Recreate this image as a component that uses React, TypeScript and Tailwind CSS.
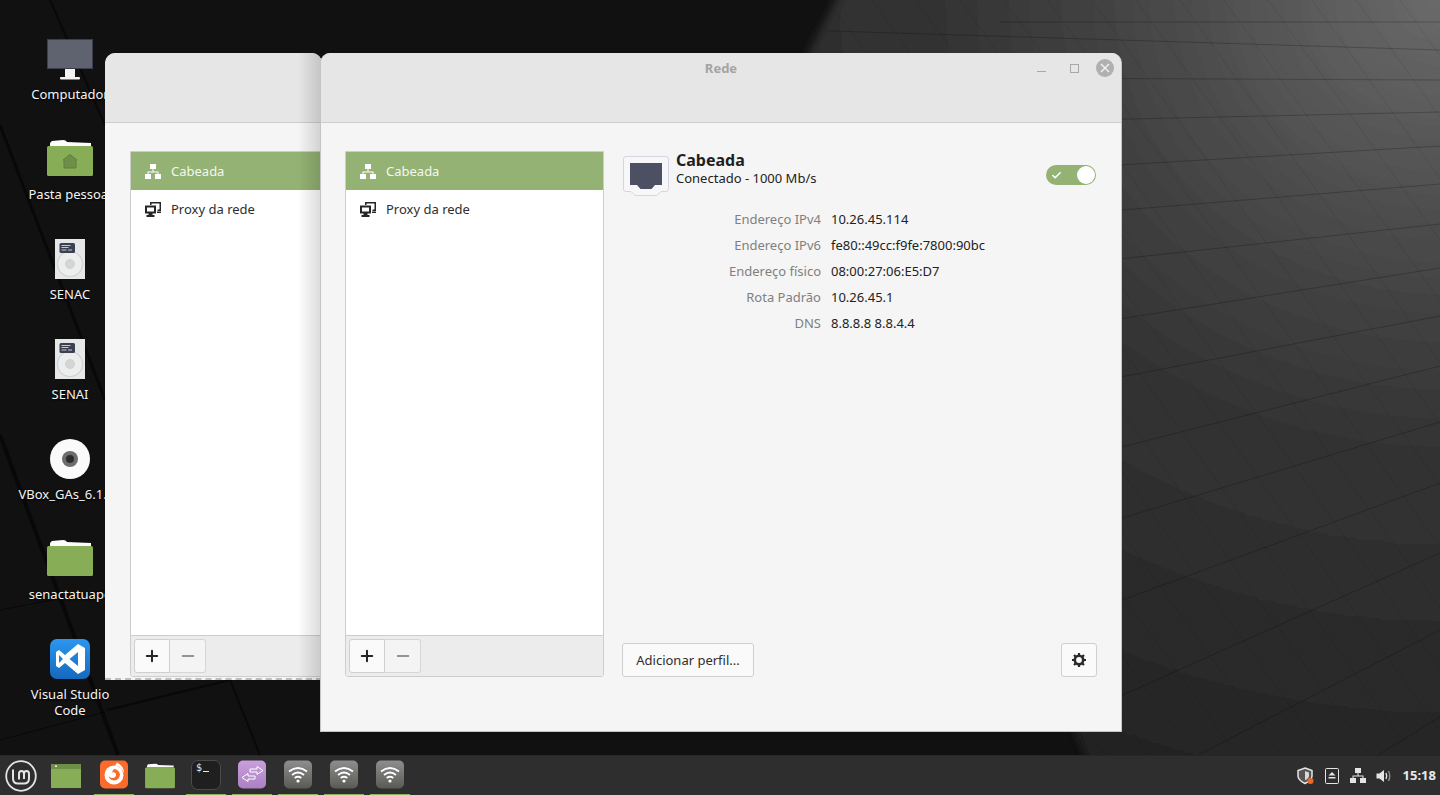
import { Minus, Plus, Check } from "lucide-react";

const font = "font-['Noto_Sans','Open_Sans',sans-serif]";

const crossLines = [
  [1000, 22, 1440, 22],
  [800, 30, 1440, 50],
  [1000, 78, 1440, 80],
  [1000, 122, 1440, 112],
  [1000, 172, 1440, 146],
  [1000, 220, 1440, 184],
  [1000, 272, 1440, 224],
  [1000, 338, 1440, 268],
  [1000, 400, 1440, 316],
  [1000, 478, 1440, 366],
  [1000, 555, 1440, 422],
  [1000, 645, 1440, 483],
  [1000, 750, 1440, 553],
  [1198, 755, 1440, 630],
  [1378, 755, 1440, 717],
];

const slantLines = Array.from({ length: 30 }, (_, i) => 300 + i * 44);

function Wallpaper() {
  return (
    <svg className="absolute inset-0" width="1440" height="795" viewBox="0 0 1440 795">
      <defs>
        <radialGradient id="wall" cx="0" cy="0" r="1" gradientUnits="userSpaceOnUse" gradientTransform="translate(1440 0) scale(1000 900)">
          <stop offset="0" stopColor="#6a6a6a" />
          <stop offset="0.32" stopColor="#444444" />
          <stop offset="0.5" stopColor="#333333" />
          <stop offset="0.7" stopColor="#2c2c2c" />
          <stop offset="0.85" stopColor="#262626" />
          <stop offset="1" stopColor="#1c1c1c" />
        </radialGradient>
        <filter id="soft" x="-5%" y="-5%" width="110%" height="110%">
          <feGaussianBlur stdDeviation="5" />
        </filter>
        <clipPath id="lit">
          <path d="M846 0 L1440 0 L1440 795 L1110 795 L800 70 Z" />
        </clipPath>
      </defs>
      <rect width="1440" height="795" fill="#111112" />
      <path d="M846 -20 L1470 -20 L1470 815 L1110 815 L800 70 Z" fill="url(#wall)" filter="url(#soft)" />
      <g clipPath="url(#lit)" fill="none" stroke="#000">
        <g strokeOpacity="0.22">
          {crossLines.map(([a, b, c, d]) => (
            <line key={`${a}-${b}`} x1={a} y1={b} x2={c} y2={d} />
          ))}
        </g>
        <g strokeOpacity="0.08">
          {slantLines.map((x) => (
            <line key={x} x1={x} y1={0} x2={x + 570} y2={795} />
          ))}
        </g>
      </g>
      <g stroke="#000" strokeOpacity="0.5" fill="none">
        <path d="M50 0 L105 125" strokeWidth="2" />
        <path d="M0 125 L105 400" strokeWidth="3" />
        <path d="M0 435 L118 755" strokeWidth="4" />
        <path d="M107 710 L230 680 L260 755" strokeWidth="2" />
        <path d="M0 740 L105 712" />
        <path d="M0 610 L105 590" />
      </g>
    </svg>
  );
}

function ComputerIcon() {
  return (
    <svg width="46" height="41" viewBox="0 0 46 41">
      <rect x="0.5" y="0.5" width="45" height="29" fill="#5f6370" stroke="#3c3f4c" />
      <rect x="18" y="30" width="10" height="8" fill="#f2f2f2" />
      <rect x="13" y="38" width="20" height="2.500" rx="1" fill="#f2f2f2" />
    </svg>
  );
}

function FolderIcon({ home }: { home?: boolean }) {
  return (
    <svg width="46" height="38" viewBox="0 0 46 38">
      <path d="M3 5 Q3 3 5 2 L16 1 Q19 1 20 3 L44 4 L44 7 L3 7 Z" fill="#fbfbfb" />
      <rect y="7" width="46" height="30" rx="1.5" fill="#87ad57" />
      {home && <path d="M23 15.500 L30 21 L29 21 L29 29 L17 29 L17 21 L16 21 Z" fill="#6e8f48" stroke="#5f7e3e" />}
    </svg>
  );
}

function DriveIcon() {
  return (
    <svg width="30" height="40" viewBox="0 0 30 40">
      <rect width="30" height="40" fill="#e6e7e9" />
      <circle cx="15" cy="25" r="12.5" fill="#eceded" stroke="#d0d1d4" strokeWidth="1.2" />
      <circle cx="15" cy="25" r="4.5" fill="#d4d5d7" stroke="#c4c5c8" strokeWidth="0.6" />
      <rect x="4.5" y="4" width="15.5" height="10" rx="1.5" fill="#3c4150" />
      <path d="M6.5 6.5h9M6.5 8.5h7M6.5 11h5M13 11h4" stroke="#d5d7dc" strokeWidth="0.9" />
    </svg>
  );
}

function DiscIcon() {
  return (
    <svg width="40" height="40" viewBox="0 0 40 40">
      <circle cx="20" cy="20" r="20" fill="#fafafa" />
      <circle cx="20" cy="20" r="8" fill="#6d6d6d" />
      <circle cx="20" cy="20" r="4" fill="#2c2c2c" />
    </svg>
  );
}

function VsCodeIcon() {
  return (
    <svg width="40" height="40" viewBox="0 0 40 40">
      <defs>
        <linearGradient id="vs" x1="0" y1="0" x2="0" y2="1">
          <stop offset="0" stopColor="#2b96f0" />
          <stop offset="1" stopColor="#1469bd" />
        </linearGradient>
      </defs>
      <rect width="40" height="40" rx="7" fill="url(#vs)" />
      <path d="M28 5 L35 9 V31 L28 35 L15 24 L9 29 L6 27 V13 L9 11 L15 16 Z M28 13 L19.500 20 L28 27 Z M9 16 V24 L13 20 Z" fill="#fff" fillRule="evenodd" />
    </svg>
  );
}

function DesktopIcon({ label, top, children }: { label: string; top: string; children: React.ReactNode }) {
  return (
    <div className={`absolute left-[0px] w-[140px] flex flex-col items-center ${top}`}>
      <div className="h-[46px] pt-[1px] flex items-start justify-center">{children}</div>
      <div className="mt-[2px] text-center text-[13px] leading-[16px] text-[#f4f4f4] whitespace-pre-line [text-shadow:0_1px_2px_#000]">{label}</div>
    </div>
  );
}

function NetworkIcon({ color }: { color: string }) {
  return (
    <svg width="16" height="15" viewBox="0 0 16 15" fill={color}>
      <rect x="5" y="0" width="6" height="5" />
      <rect x="0" y="10" width="6" height="5" />
      <rect x="10" y="10" width="6" height="5" />
      <path d="M7.500 5h1v2.500h5V10h-1V8.500h-9V10h-1V7.500h5z" />
    </svg>
  );
}

function ProxyIcon() {
  return (
    <svg width="16" height="15" viewBox="0 0 16 15" fill="#262626">
      <path d="M5 0H16V9H12.500V7.500H14.500V1.500H6.500V3H5z" />
      <path d="M0 3.500H11V11.500H7.500V13H9.500V15H1.500V13H3.500V11.500H0Z M2 5.500V9.500H9V5.500Z" fillRule="evenodd" />
      <path d="M12 9.500H16V11H12z" />
    </svg>
  );
}

function NetworkList({ width }: { width: string }) {
  return (
    <div className={`flex flex-col ${width} h-[526px] shrink-0 border border-[#cdcdcd] rounded-b-[3px] bg-white`}>
      <div className="flex items-center h-[38px] pl-[14px] gap-[10px] bg-[#93b273] text-[#f4f7ef] text-[13px]">
        <NetworkIcon color="#fff" />
        <span className="pt-[2px]">Cabeada</span>
      </div>
      <div className="flex items-center h-[38px] pl-[14px] gap-[10px] text-[#2e2e2e] text-[13px]">
        <ProxyIcon />
        <span className="pt-[2px]">Proxy da rede</span>
      </div>
      <div className="flex-1" />
      <div className="flex h-[41px] items-start pl-[3px] pt-[3px] bg-[#ececec] border-t border-[#cdcdcd] rounded-b-[3px]">
        <div className="flex h-[34px] w-[36px] items-center justify-center bg-[#fafafa] border border-[#cfcfcf] rounded-l-[3px]">
          <Plus size={18} strokeWidth={2.7} color="#262626" />
        </div>
        <div className="flex h-[34px] w-[36px] items-center justify-center bg-[#f4f4f4] border border-l-0 border-[#d6d6d6] rounded-r-[3px]">
          <Minus size={18} strokeWidth={2.7} color="#929292" />
        </div>
      </div>
    </div>
  );
}

function EthernetIcon() {
  return (
    <svg width="46" height="41" viewBox="0 0 46 41" className="ml-[1px]">
      <path d="M3 0.500H43Q45.500 0.500 45.500 3V33Q45.500 35.500 43 35.500H38L34 39.500H12L8 35.500H3Q0.500 35.500 0.500 33V3Q0.500 0.500 3 0.500Z" fill="#f7f7f9" stroke="#d3d6e0" />
      <path d="M7 7H39V29H32L28.500 33H17.500L14 29H7Z" fill="#4d5063" />
    </svg>
  );
}

function GearIcon() {
  return (
    <svg width="16" height="16" viewBox="0 0 16 16" fill="none" stroke="#2a2a2a">
      <circle cx="8" cy="8" r="4.200" strokeWidth="2.600" />
      <path d="M8 1V3M8 13V15M1 8H3M13 8H15M3 3L4.500 4.500M13 3L11.500 4.500M3 13L4.500 11.500M13 13L11.500 11.500" strokeWidth="2.200" />
    </svg>
  );
}

const details = [
  ["Endereço IPv4", "10.26.45.114"],
  ["Endereço IPv6", "fe80::49cc:f9fe:7800:90bc"],
  ["Endereço físico", "08:00:27:06:E5:D7"],
  ["Rota Padrão", "10.26.45.1"],
  ["DNS", "8.8.8.8 8.8.4.4"],
];

function DetailPane() {
  return (
    <div className="flex flex-col flex-1 ml-[18px] h-[526px]">
      <div className="flex items-start pt-[5px]">
        <EthernetIcon />
        <div className="ml-[7px] -mt-[6px] flex-1">
          <div className="text-[16px] leading-[20px] font-bold text-[#1f1f1f]">Cabeada</div>
          <div className="text-[13px] leading-[16px] text-[#222]">Conectado - 1000 Mb/s</div>
        </div>
        <div className="mt-[9px] mr-[1px] relative flex items-center w-[50px] h-[20px] rounded-full bg-[#93b273]">
          <Check size={11} strokeWidth={3.500} color="#fff" className="ml-[5px]" />
          <div className="absolute right-[1px] top-[1px] w-[18px] h-[18px] rounded-full bg-white" />
        </div>
      </div>
      <div className="mt-[10px] flex flex-col">
        {details.map(([k, v]) => (
          <div key={k} className="flex h-[26px] items-center text-[13px]">
            <div className="w-[199px] text-right text-[#808080]">{k}</div>
            <div className="ml-[10px] text-[#222]">{v}</div>
          </div>
        ))}
      </div>
      <div className="flex-1" />
      <div className="flex justify-between items-end">
        <div className="flex h-[34px] w-[132px] pt-[2px] items-center justify-center bg-[#fafafa] border border-[#cfcfcf] rounded-[3px] text-[13px] text-[#2e2e2e]">Adicionar perfil...</div>
        <div className="flex h-[34px] w-[36px] items-center justify-center bg-[#fafafa] border border-[#cfcfcf] rounded-[3px]">
          <GearIcon />
        </div>
      </div>
    </div>
  );
}

function Header({ title }: { title?: boolean }) {
  return (
    <div className="relative h-[70px] shrink-0 bg-[#e6e6e6] border-b border-[#cdcdcd] rounded-t-[10px]">
      {title && (
        <>
          <div className="pt-[6px] text-center text-[13px] font-bold text-[#a4a4a4]">Rede</div>
          <div className="absolute right-[7px] top-[6px] flex items-center">
            <div className="w-[9px] h-[1px] bg-[#a8a8a8] mt-[7px] mr-[24px]" />
            <div className="w-[9px] h-[9px] border border-[#a8a8a8] mr-[17px]" />
            <div className="flex w-[18px] h-[18px] items-center justify-center rounded-full bg-[#b0b0b0]">
              <svg width="10" height="10" viewBox="0 0 10 10" stroke="#f4f4f4" strokeWidth="1.300"><path d="M1 1l8 8M9 1l-8 8" /></svg>
            </div>
          </div>
        </>
      )}
    </div>
  );
}

function BackWindow() {
  return (
    <div className="absolute left-[105px] top-[53px] w-[217px] h-[627px] flex flex-col bg-[#f5f5f5] rounded-t-[10px] overflow-hidden">
      <Header />
      <div className="flex flex-1 pl-[25px] pt-[28px] border-b-[2px] border-dashed border-[#bdbdbd]">
        <div className="w-[190px] overflow-hidden shrink-0">
          <NetworkList width="w-[259px]" />
        </div>
      </div>
      <div className="absolute right-0 top-0 bottom-0 w-[24px] bg-gradient-to-r from-transparent to-black/15" />
    </div>
  );
}

function FrontWindow() {
  return (
    <div className="absolute left-[320px] top-[53px] w-[802px] h-[679px] flex flex-col bg-[#f5f5f5] rounded-t-[10px] border-x border-b border-[#c4c4c4]">
      <Header title />
      <div className="flex pl-[24px] pr-[24px] pt-[28px]">
        <NetworkList width="w-[259px]" />
        <DetailPane />
      </div>
    </div>
  );
}

function Wifi({ id }: { id: string }) {
  return (
    <svg width="28" height="29" viewBox="0 0 28 29">
      <defs>
        <linearGradient id={id} x1="0" y1="0" x2="0" y2="1">
          <stop offset="0" stopColor="#8e8e8e" />
          <stop offset="1" stopColor="#5a5a55" />
        </linearGradient>
      </defs>
      <rect width="28" height="28" y="0.500" rx="5" fill={`url(#${id})`} />
      <g fill="none" stroke="#fff" strokeWidth="1.800">
        <path d="M5 11.500Q14 4.500 23 11.500" />
        <path d="M8 15Q14 10 20 15" />
        <path d="M10.700 18Q14 15.500 17.300 18" />
      </g>
      <circle cx="14" cy="21" r="1.600" fill="#fff" />
    </svg>
  );
}

function Slot({ active, children }: { active?: boolean; children: React.ReactNode }) {
  return (
    <div className={`relative flex w-[40px] h-[40px] items-center justify-center ${active ? "border-b-2 border-[#8bb05f]" : ""}`}>
      {children}
    </div>
  );
}

function FolderIconSmall() {
  return (
    <svg width="30" height="26" viewBox="0 0 46 40">
      <path d="M3 5 Q3 3 5 2 L16 1 Q19 1 20 3 L44 4 L44 7 L3 7 Z" fill="#fbfbfb" />
      <rect y="7" width="46" height="32" rx="2" fill="#87ad57" />
    </svg>
  );
}

function Panel() {
  return (
    <div className="absolute left-0 right-0 bottom-0 h-[40px] flex items-center bg-[#2e2e2e] border-t border-[#262626]">
      <div className="ml-[5px] mr-[11px] w-[32px] h-[32px]">
        <svg width="32" height="32" viewBox="0 0 32 32" fill="none" stroke="#e4e4e4">
          <circle cx="16" cy="16" r="14.800" strokeWidth="1.800" />
          <path d="M8 9.500V18.500Q8 23.500 13 23.500H19Q24 23.500 24 18.500V14Q24 11 21.500 11Q19 11 19 14V19M19 14Q19 11 16.500 11Q14 11 14 14V19.500" strokeWidth="2" />
        </svg>
      </div>
      <div className="flex gap-[6px] items-center">
        <Slot>
          <svg width="30" height="24" viewBox="0 0 30 24" className="-ml-[4px]">
            <rect width="30" height="24" fill="#87ad57" />
            <rect width="30" height="5" fill="#6e8f48" />
            <rect x="4" y="1.500" width="2" height="1.500" fill="#f0f0f0" />
          </svg>
        </Slot>
        <Slot active>
          <svg width="28" height="29" viewBox="0 0 28 29">
            <rect width="28" height="28" y="0.500" rx="5" fill="#fb6b2b" />
            <circle cx="14" cy="15" r="9.500" fill="#fff" />
            <path d="M14 9Q19 9.500 20 14.500Q19.500 20 14 20.500Q9.500 20 8.500 16Q11 19 14.500 17.500Q17 15.500 15.500 13Q14 12 12 12.500Q12.500 10.500 14 9Z" fill="#fb6b2b" />
            <path d="M17 2.500Q24 6 24 13Q21 6 15 5.500Z" fill="#fff" />
          </svg>
        </Slot>
        <Slot>
          <FolderIconSmall />
        </Slot>
        <Slot active>
          <div className="relative w-[30px] h-[30px] rounded-[7px] bg-[#1f1f1f] border border-[#4a4a4a]">
            <span className="absolute left-[4px] top-[0px] text-[10px] leading-[14px] font-['DejaVu_Sans_Mono',monospace] text-[#e6e6e6]">$</span>
            <div className="absolute left-[11px] top-[10px] w-[6px] h-[1px] bg-[#e6e6e6]" />
          </div>
        </Slot>
        <Slot active>
          <svg width="28" height="29" viewBox="0 0 28 29">
            <defs>
              <linearGradient id="pp" x1="0" y1="0" x2="0" y2="1">
                <stop offset="0" stopColor="#c8a0dc" />
                <stop offset="1" stopColor="#ac80c4" />
              </linearGradient>
            </defs>
            <rect width="28" height="28" y="0.500" rx="5" fill="url(#pp)" />
            <g fill="none" stroke="#fff" strokeWidth="1">
              <path d="M25 10.500L19 6.500V9H12V12H19V14.500Z" />
              <path d="M4 17.500L10 13.500V16H17V19H10V21.500Z" />
            </g>
          </svg>
        </Slot>
        <Slot active><Wifi id="wf1" /></Slot>
        <Slot active><Wifi id="wf2" /></Slot>
        <Slot active><Wifi id="wf3" /></Slot>
      </div>
      <div className="flex-1" />
      <div className="flex items-center">
        <svg width="18" height="18" viewBox="0 0 18 18" className="mr-[10px]">
          <path d="M8 1L15 3.500V9Q15 13 8 16.500Q1 13 1 9V3.500Z" fill="#555" stroke="#e6e6e6" strokeWidth="1.500" />
          <path d="M8 4L12 5.500V9Q12 11 8 13.500Z" fill="#d8d8d8" />
          <circle cx="13.500" cy="14" r="3" fill="#e9692c" />
        </svg>
        <svg width="14" height="16" viewBox="0 0 14 16" className="mr-[11px]" fill="#e4e4e4">
          <path d="M1.500 0.500H12.500Q13.500 0.500 13.500 1.500V14.500Q13.500 15.500 12.500 15.500H1.500Q0.500 15.500 0.500 14.500V1.500Q0.500 0.500 1.500 0.500Z" fill="none" stroke="#e4e4e4" />
          <path d="M7 4L10.500 7.500H3.500Z" />
          <rect x="3.500" y="9" width="7" height="1.500" />
        </svg>
        <NetworkIcon color="#e4e4e4" />
        <svg width="16" height="16" viewBox="0 0 16 16" className="ml-[10px] mr-[11px]">
          <path d="M0.500 5.500H3.500L8 2V14L3.500 10.500H0.500Z" fill="#e4e4e4" />
          <path d="M10 5Q11.500 8 10 11" stroke="#e4e4e4" strokeWidth="1.400" fill="none" />
          <path d="M12.500 3Q15 8 12.500 13" stroke="#8d8d8d" strokeWidth="1.400" fill="none" />
        </svg>
        <span className="mr-[4px] text-[13px] font-bold text-[#e8e8e8]">15:18</span>
      </div>
    </div>
  );
}

export default function App() {
  return (
    <div className={`relative w-[1440px] h-[795px] overflow-hidden bg-[#111] ${font}`}>
      <Wallpaper />
      <DesktopIcon label="Computador" top="top-[38px]"><ComputerIcon /></DesktopIcon>
      <DesktopIcon label="Pasta pessoal" top="top-[138px]"><FolderIcon home /></DesktopIcon>
      <DesktopIcon label="SENAC" top="top-[238px]"><DriveIcon /></DesktopIcon>
      <DesktopIcon label="SENAI" top="top-[338px]"><DriveIcon /></DesktopIcon>
      <DesktopIcon label="VBox_GAs_6.1.38" top="top-[438px]"><DiscIcon /></DesktopIcon>
      <DesktopIcon label="senactatuape" top="top-[538px]"><FolderIcon /></DesktopIcon>
      <DesktopIcon label={"Visual Studio\nCode"} top="top-[638px]"><VsCodeIcon /></DesktopIcon>
      <BackWindow />
      <FrontWindow />
      <Panel />
    </div>
  );
}
